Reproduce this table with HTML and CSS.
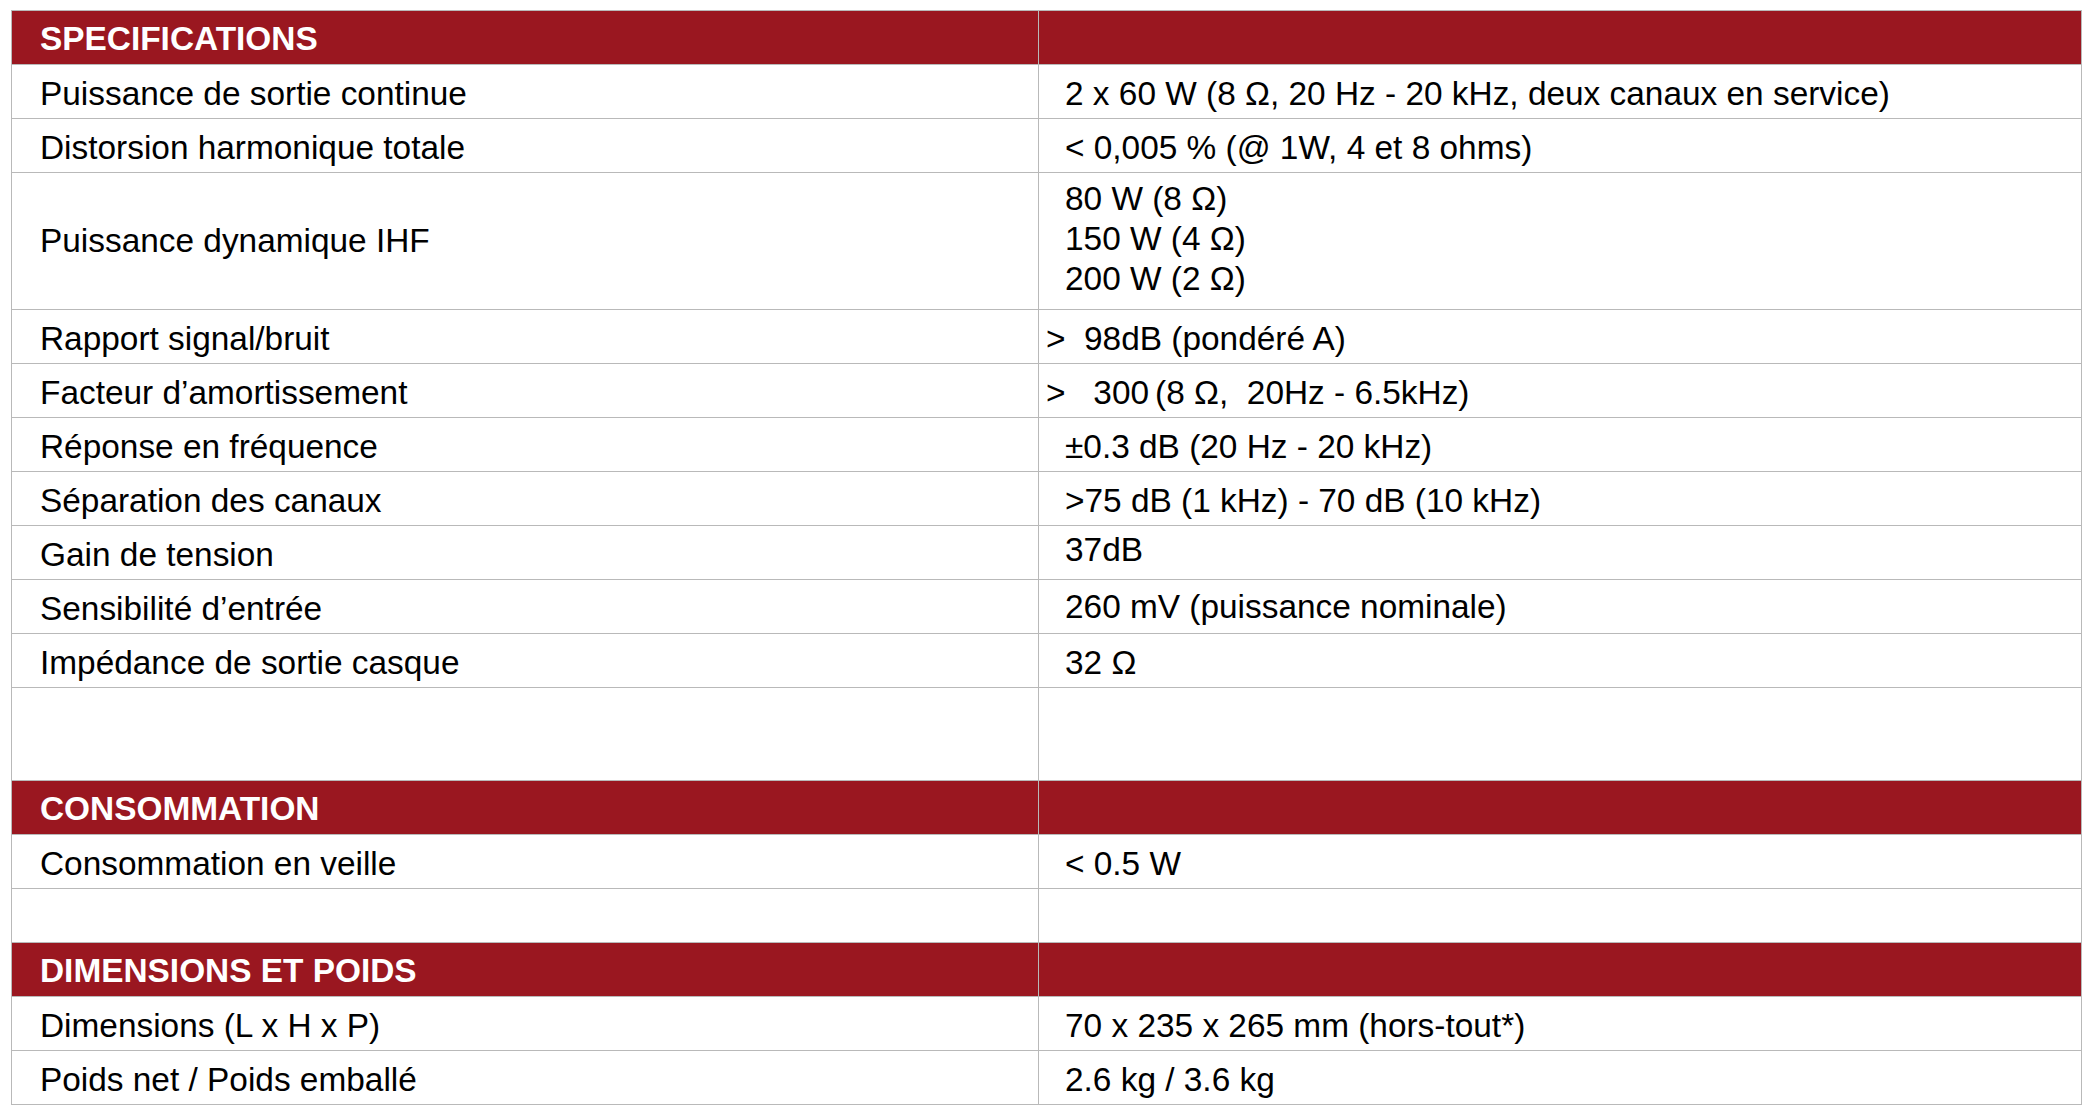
FILE: index.html
```html
<!DOCTYPE html>
<html lang="fr">
<head>
<meta charset="utf-8">
<title>Specifications</title>
<link rel="stylesheet" href="styles.css">
</head>
<body>
<table class="specs">
  <colgroup><col class="col-label"><col class="col-value"></colgroup>
  <tbody>
    <tr class="head"><th>SPECIFICATIONS</th><th></th></tr>
    <tr><td>Puissance de sortie continue</td><td class="val">2 x 60 W (8 Ω, 20 Hz - 20 kHz, deux canaux en service)</td></tr>
    <tr><td>Distorsion harmonique totale</td><td class="val">&lt; 0,005 % (@ 1W, 4 et 8 ohms)</td></tr>
    <tr class="multi"><td>Puissance dynamique IHF</td><td class="val"><div class="line">80 W (8 Ω)</div><div class="line">150 W (4 Ω)</div><div class="line">200 W (2 Ω)</div></td></tr>
    <tr><td>Rapport signal/bruit</td><td class="val val-tight">&gt;&nbsp; 98dB (pondéré A)</td></tr>
    <tr><td>Facteur d’amortissement</td><td class="val val-tight">&gt;&nbsp;&nbsp; 300<span class="thin"> </span>(8 Ω,&nbsp; 20Hz - 6.5kHz)</td></tr>
    <tr><td>Réponse en fréquence</td><td class="val">±0.3 dB (20 Hz - 20 kHz)</td></tr>
    <tr><td>Séparation des canaux</td><td class="val">&gt;75 dB (1 kHz) - 70 dB (10 kHz)</td></tr>
    <tr><td>Gain de tension</td><td class="val val-up">37dB</td></tr>
    <tr><td>Sensibilité d’entrée</td><td class="val val-up2">260 mV (puissance nominale)</td></tr>
    <tr><td>Impédance de sortie casque</td><td class="val">32 Ω</td></tr>
    <tr class="blank-tall"><td></td><td></td></tr>
    <tr class="head"><th>CONSOMMATION</th><th></th></tr>
    <tr><td>Consommation en veille</td><td class="val">&lt; 0.5 W</td></tr>
    <tr class="blank"><td></td><td></td></tr>
    <tr class="head"><th>DIMENSIONS ET POIDS</th><th></th></tr>
    <tr><td>Dimensions (L x H x P)</td><td class="val">70 x 235 x 265 mm (hors-tout*)</td></tr>
    <tr><td>Poids net / Poids emballé</td><td class="val">2.6 kg / 3.6 kg</td></tr>
  </tbody>
</table>
</body>
</html>
```
FILE: styles.css
```css
html, body {
  margin: 0;
  padding: 0;
  background: #ffffff;
}

body {
  padding: 10px 0 0 11px;
  font-family: "Liberation Sans", Arial, Helvetica, sans-serif;
  color: #000;
}

.specs {
  border-collapse: collapse;
  width: 2070px;
  table-layout: fixed;
  font-size: 33.4px;
}

.col-label { width: 1027px; }
.col-value { width: 1043px; }

.specs th,
.specs td {
  border: 1px solid #b9b9b9;
  height: 54px;
  padding: 4px 0 0 28px;
  box-sizing: border-box;
  line-height: 38px;
  vertical-align: middle;
  text-align: left;
  white-space: nowrap;
}

.specs td.val {
  padding-left: 26px;
}

.specs td.val-tight {
  padding-left: 7px;
}

.specs td.val-up {
  padding-top: 0;
  padding-bottom: 6px;
}

.specs td.val-up2 {
  padding-top: 2px;
  padding-bottom: 2px;
}

.thin {
  display: inline-block;
  width: 6px;
}

.head th {
  background: #9a1720;
  color: #ffffff;
  font-weight: bold;
  font-size: 33.4px;
  padding-top: 2px;
}

.multi td {
  height: 135px;
  padding-top: 8px;
  padding-bottom: 8px;
}

.multi td.val {
  padding-top: 6px;
  padding-bottom: 10px;
}

.multi .line {
  line-height: 40px;
}

.blank-tall td {
  height: 93px;
}

.blank td {
  height: 54px;
}
```
